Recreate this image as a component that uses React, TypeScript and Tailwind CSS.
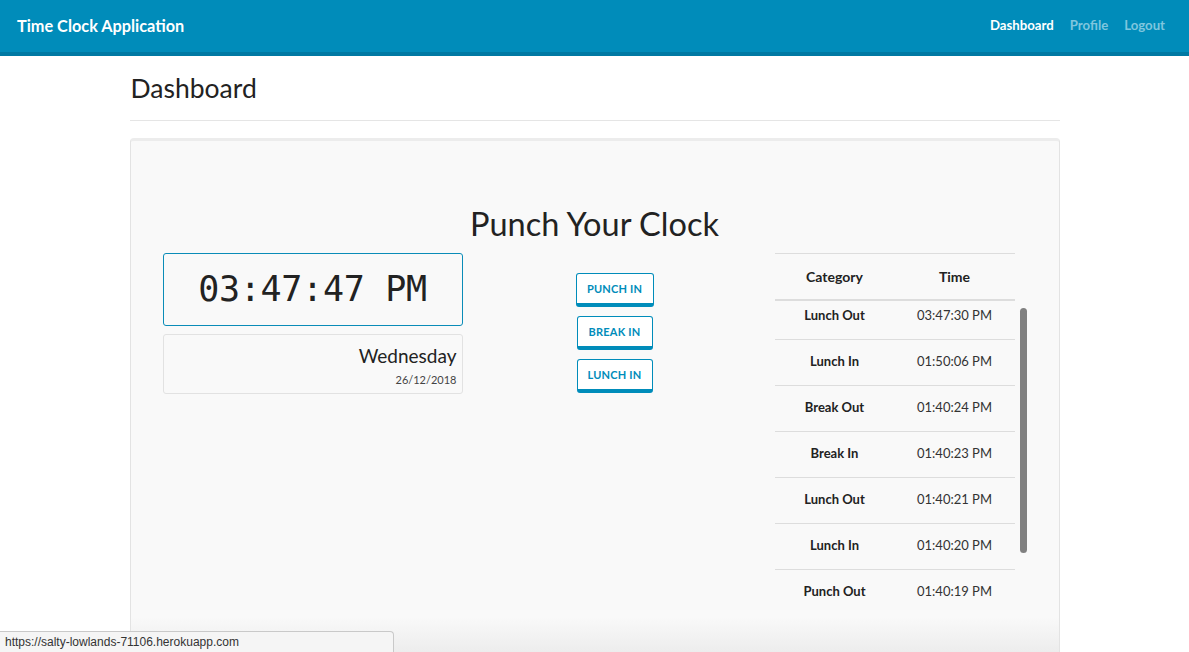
import React from "react";

const rows = [
  ["Lunch Out", "03:47:30 PM"],
  ["Lunch In", "01:50:06 PM"],
  ["Break Out", "01:40:24 PM"],
  ["Break In", "01:40:23 PM"],
  ["Lunch Out", "01:40:21 PM"],
  ["Lunch In", "01:40:20 PM"],
  ["Punch Out", "01:40:19 PM"],
];

function Btn({ label, w }: { label: string; w: string }) {
  return (
    <button
      className={`${w} h-[34px] bg-white border border-[#008cba] border-b-[4px] rounded-[3px] text-[11px] font-bold text-[#008cba] tracking-[0.2px] flex items-center justify-center pt-[2px]`}
    >
      {label}
    </button>
  );
}

export default function App() {
  return (
    <div
      className="w-[1189px] h-[652px] overflow-hidden bg-white relative"
      style={{ fontFamily: "Lato, 'Noto Sans', sans-serif" }}
    >
      <nav className="h-[56px] bg-[#008cba] border-b-[4px] border-[#0079a3] flex items-center justify-between px-[17px]">
        <div className="text-white text-[16.3px] font-bold">Time Clock Application</div>
        <div className="flex items-center gap-[16px] text-[13.2px] font-bold pr-[7px]">
          <span className="text-white">Dashboard</span>
          <span className="text-[#7fc6de]">Profile</span>
          <span className="text-[#7fc6de]">Logout</span>
        </div>
      </nav>

      <div className="w-[930px] mx-auto">
        <div className="h-[65px] border-b border-[#e5e5e5] flex items-end pb-[19px]">
          <h2 className="text-[26.5px] text-[#222] leading-none pl-[1px]">Dashboard</h2>
        </div>

        <div className="mt-[17px] h-[520px] relative overflow-hidden bg-[#f9f9f9] border border-[#e3e3e3] border-t-[3px] border-t-[#ececec] rounded-[4px]">
          <div className="pt-[67px] text-center text-[32.5px] text-[#222] leading-none">Punch Your Clock</div>

          <div className="flex mt-[12px] pl-[32px]">
            <div className="w-[300px] flex flex-col gap-[8px]">
              <div className="h-[73px] border border-[#0a8cb8] rounded-[3px] flex items-center justify-center">
                <span
                  className="text-[35px] text-[#222] leading-none tracking-[-0.3px]"
                  style={{ fontFamily: "'DejaVu Sans Mono', monospace" }}
                >
                  03:47:47 PM
                </span>
              </div>
              <div className="h-[60px] border border-[#e2e2e2] rounded-[3px] flex flex-col items-end pr-[5px] pt-[11px]">
                <div className="text-[19px] text-[#222] leading-none">Wednesday</div>
                <div className="text-[11px] text-[#444] leading-none mt-[9px]">26/12/2018</div>
              </div>
            </div>

            <div className="w-[304px] flex flex-col items-center pt-[20px] gap-[9px]">
              <Btn label="PUNCH IN" w="w-[78px]" />
              <Btn label="BREAK IN" w="w-[76px]" />
              <Btn label="LUNCH IN" w="w-[76px]" />
            </div>

            <div className="ml-[8px] w-[240px] relative">
              <div className="border-t border-[#dddddd] border-b-2 h-[48px] flex items-center text-[14px] font-bold text-[#222]">
                <div className="w-1/2 text-center">Category</div>
                <div className="w-1/2 text-center">Time</div>
              </div>
              <div className="h-[314px] overflow-hidden">
                <div className="-mt-[8px]">
                  {rows.map((r, i) => (
                    <div
                      key={i}
                      className={`h-[46px] flex items-center text-[13px] ${i > 0 ? "border-t border-[#dddddd]" : ""}`}
                    >
                      <div className="w-1/2 text-center font-bold text-[#222]">{r[0]}</div>
                      <div className="w-1/2 text-center text-[#333]">{r[1]}</div>
                    </div>
                  ))}
                </div>
              </div>
              <div className="absolute left-[245px] top-[55px] w-[7px] h-[245px] rounded-full bg-[#808080]" />
            </div>
          </div>

          <div className="absolute left-0 right-0 bottom-0 h-[40px] bg-gradient-to-b from-[#f9f9f900] to-[#ebebeb]" />
        </div>
      </div>

      <div
        className="absolute left-0 bottom-0 w-[394px] h-[21px] bg-[#f5f5f5] border-t border-r border-[#c9c9c9] rounded-tr-[4px] text-[12px] text-[#333] pl-[5px] leading-[20px]"
        style={{ fontFamily: "'Liberation Sans', Arial, sans-serif" }}
      >
        https://salty-lowlands-71106.herokuapp.com
      </div>
    </div>
  );
}
